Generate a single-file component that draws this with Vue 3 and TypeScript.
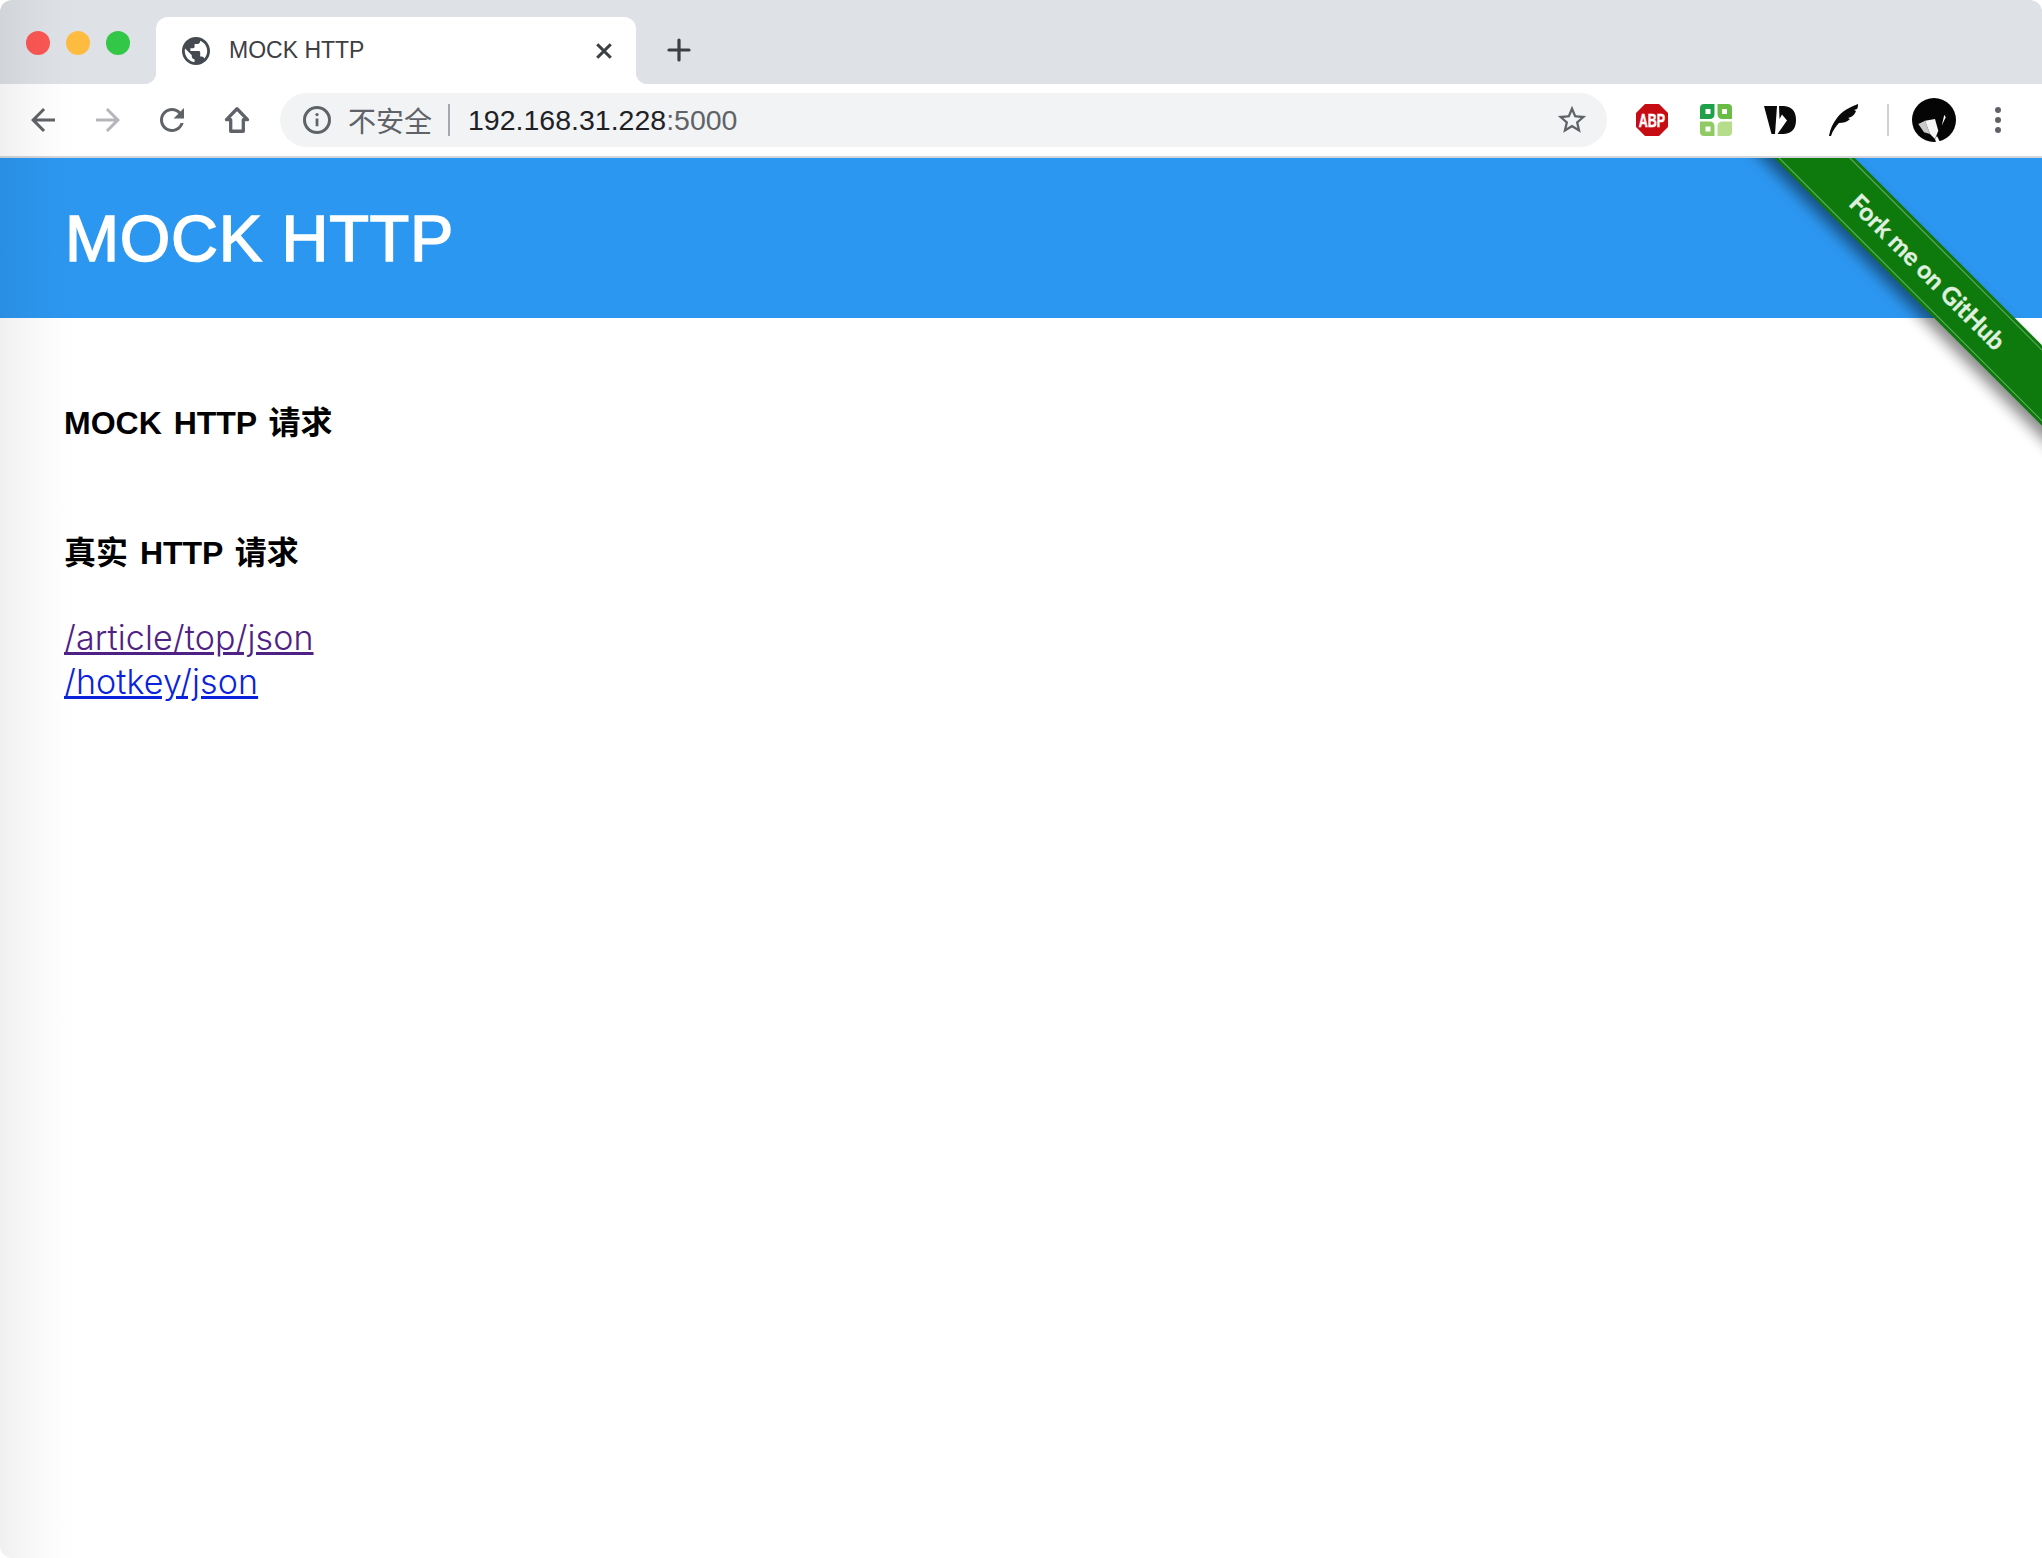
<script setup lang="ts">
interface ApiLink {
  href: string
  visited: boolean
}
// 真实请求的接口列表
const links: ApiLink[] = [
  { href: '/article/top/json', visited: true },
  { href: '/hotkey/json', visited: false },
]
</script>

<template>
  <div class="browser">
    <div class="tab-strip">
      <div class="lights">
        <span class="light light--red"></span>
        <span class="light light--yellow"></span>
        <span class="light light--green"></span>
      </div>
      <div class="tab">
        <svg class="tab__globe" viewBox="2 2 20 20">
          <path fill="#444a50" d="M12 2C6.48 2 2 6.48 2 12s4.48 10 10 10 10-4.48 10-10S17.52 2 12 2zm-1 17.93c-3.95-.49-7-3.85-7-7.930 0-.62.08-1.21.21-1.79L9 15v1c0 1.1.9 2 2 2v1.930zm6.900-2.540c-.26-.81-1-1.390-1.900-1.390h-1v-3c0-.55-.45-1-1-1H8v-2h2c.55 0 1-.45 1-1V7h2c1.100 0 2-.9 2-2v-.41c2.930 1.190 5 4.060 5 7.410 0 2.080-.8 3.970-2.100 5.390z" />
        </svg>
        <span class="tab__title">MOCK HTTP</span>
        <svg class="tab__close" viewBox="0 0 16 16">
          <path d="M2 2l12 12M14 2L2 14" stroke="#3c4043" stroke-width="2.800" fill="none" />
        </svg>
      </div>
      <svg class="new-tab" viewBox="0 0 24 24">
        <path d="M12 2v20M2 12h20" stroke="#3c4043" stroke-width="3.200" stroke-linecap="round" fill="none" />
      </svg>
    </div>

    <div class="toolbar">
      <button class="tool">
        <svg viewBox="0 0 24 24" class="tool__icon"><path fill="#5f6368" d="M20 11H7.830l5.590-5.590L12 4l-8 8 8 8 1.410-1.410L7.830 13H20v-2z" /></svg>
      </button>
      <button class="tool">
        <svg viewBox="0 0 24 24" class="tool__icon"><path fill="#b4b6b9" d="M4 11h12.170l-5.590-5.590L12 4l8 8-8 8-1.410-1.410L16.170 13H4v-2z" /></svg>
      </button>
      <button class="tool">
        <svg viewBox="0 0 24 24" class="tool__icon"><path fill="#5f6368" d="M17.650 6.350C16.200 4.900 14.210 4 12 4c-4.420 0-7.990 3.580-7.990 8s3.570 8 7.990 8c3.730 0 6.840-2.550 7.730-6h-2.080c-.82 2.330-3.040 4-5.650 4-3.310 0-6-2.690-6-6s2.690-6 6-6c1.660 0 3.140.69 4.220 1.780L13 11h7V4l-2.350 2.350z" /></svg>
      </button>
      <button class="tool">
        <svg viewBox="0 0 24 24" class="tool__icon"><path fill="none" stroke="#5f6368" stroke-width="2.200" stroke-linejoin="round" d="M12 4.500L5 11.800h2.800v7.700h8.400v-7.700H19z" /></svg>
      </button>

      <div class="omnibox">
        <svg class="omnibox__info" viewBox="0 0 24 24">
          <circle cx="12" cy="12" r="10" fill="none" stroke="#5f6368" stroke-width="2.400" />
          <path d="M12 10.800v6.200" stroke="#5f6368" stroke-width="2.200" />
          <circle cx="12" cy="7.600" r="1.300" fill="#5f6368" />
        </svg>
        <span class="omnibox__insecure">不安全</span>
        <span class="omnibox__sep"></span>
        <span class="omnibox__url">192.168.31.228<span class="omnibox__port">:5000</span></span>
        <svg class="omnibox__star" viewBox="0 0 24 24">
          <path fill="#5f6368" d="M22 9.240l-7.190-.62L12 2 9.190 8.630 2 9.240l5.460 4.730L5.820 21 12 17.270 18.180 21l-1.630-7.030L22 9.240zM12 15.400l-3.760 2.270 1-4.280-3.320-2.880 4.380-.38L12 6.100l1.710 4.040 4.380.38-3.320 2.880 1 4.280L12 15.400z" />
        </svg>
      </div>

      <div class="extensions">
        <div class="ext">
          <svg viewBox="0 0 34 34" class="ext__icon">
            <path fill="#c70d13" d="M10 1h14l9 9v14l-9 9H10l-9-9V10z" />
            <text transform="translate(17 23.500) scale(1 1.450)" class="abp-text" text-anchor="middle">ABP</text>
          </svg>
        </div>
        <div class="ext">
          <svg viewBox="0 0 34 34" class="ext__icon">
            <path fill="#1fa049" fill-rule="evenodd" d="M5 1h10.500v10q0 5-5 5H1V5q0-4 4-4zM6.500 6v5h5V6z" />
            <path fill="#69bd45" fill-rule="evenodd" d="M18.500 1H29q4 0 4 4v11H23.500q-5 0-5-5zM23 6v5h5V6z" />
            <path fill="#8fcb62" fill-rule="evenodd" d="M1 18.500h9.500q5 0 5 5V33H5q-4 0-4-4zM6.500 23.500v5h5v-5z" />
            <path fill="#b5dd8b" d="M23.500 18.500H33V29q0 4-4 4H18.500V23.500q0-5 5-5z" />
          </svg>
        </div>
        <div class="ext">
          <svg viewBox="0 0 34 34" class="ext__icon">
            <path fill="#0a0a0a" d="M1 3h13l-2 28H8.500z" />
            <path fill="#0a0a0a" d="M16 3h5q12 1 12 14T21 31h-6.500L24 17.500 19 11.500 16.500 16z" />
          </svg>
        </div>
        <div class="ext">
          <svg viewBox="0 0 34 34" class="ext__icon">
            <path fill="#0a0a0a" d="M2 33c1-7 4-13 8-18C15 8 23 4 31 1c0 2 0 3-1 5l-3 1 2 1c-1 3-3 5-5 6l-3 1 2 1c-3 3-7 4-11 4-3 3-6 7-8 13z" />
          </svg>
        </div>
        <span class="ext-sep"></span>
        <svg viewBox="0 0 44 44" class="avatar">
          <circle cx="22" cy="22" r="22" fill="#050505" />
          <path fill="#c9c9c9" d="M6.300 26L13 22.700 18 36l-6-1.700z" />
          <path fill="#f4f4f4" d="M13 22.700L23 21l3.300 11.700L23 41l-5-5z" />
          <path fill="#fff" d="M23 41l2-3 3 6h-4z" />
          <path fill="#fff" d="M32.300 16.700l1.400 2.600-4 8.400z" />
        </svg>
        <svg viewBox="0 0 8 28" class="menu">
          <circle cx="4" cy="4" r="3" fill="#5f6368" />
          <circle cx="4" cy="14" r="3" fill="#5f6368" />
          <circle cx="4" cy="24" r="3" fill="#5f6368" />
        </svg>
      </div>
    </div>

    <div class="page">
      <header class="page__header">
        <h1 class="page__title">MOCK HTTP</h1>
      </header>
      <main class="page__main">
        <h3 class="section-title">MOCK HTTP 请求</h3>
        <h3 class="section-title section-title--second">真实 HTTP 请求</h3>
        <div class="links">
          <a
            v-for="link in links"
            :key="link.href"
            class="links__item"
            :class="{ 'links__item--visited': link.visited }"
            :href="link.href"
          >{{ link.href }}</a>
        </div>
      </main>

      <div class="ribbon-clip">
        <a class="ribbon" href="#">
          <span class="ribbon__inner">Fork me on GitHub</span>
        </a>
      </div>
    </div>

    <div class="edge-shade"></div>
  </div>
</template>

<style scoped>
.browser {
  position: relative;
  width: 2042px;
  height: 1558px;
  overflow: hidden;
  background: #fff;
  font-family: "Liberation Sans", "Noto Sans CJK SC", sans-serif;
  border-radius: 12px 12px 0 12px;
}
.tab-strip {
  height: 84px;
  display: flex;
  background: #dee1e6;
}
.lights {
  width: 156px;
  display: flex;
  gap: 16px;
  padding: 31px 0 0 26px;
  box-sizing: border-box;
}
.light {
  width: 24px;
  height: 24px;
  border-radius: 50%;
}
.light--red {
  background: #fc5753;
}
.light--yellow {
  background: #fdbc40;
}
.light--green {
  background: #33c748;
}
.tab {
  position: relative;
  width: 480px;
  height: 67px;
  margin-top: 17px;
  background: #fff;
  border-radius: 12px 12px 0 0;
  display: flex;
  align-items: center;
  padding: 0 23px 0 26px;
  box-sizing: border-box;
}
.tab::before,
.tab::after {
  content: "";
  position: absolute;
  bottom: 0;
  width: 12px;
  height: 12px;
}
.tab::before {
  left: -12px;
  background: radial-gradient(circle at 0 0, transparent 12px, #fff 12.500px);
}
.tab::after {
  right: -12px;
  background: radial-gradient(circle at 100% 0, transparent 12px, #fff 12.500px);
}
.tab__globe {
  width: 28px;
  height: 28px;
  flex: none;
}
.tab__title {
  margin-left: 19px;
  font-size: 23px;
  color: #3c4043;
  flex: 1;
}
.tab__close {
  width: 18px;
  height: 18px;
}
.new-tab {
  width: 24px;
  height: 24px;
  margin: 38px 0 0 31px;
}
.toolbar {
  height: 72px;
  display: flex;
  align-items: center;
  background: #fff;
  padding-left: 11px;
  border-bottom: 2px solid #d4d6da;
}
.tool {
  width: 64.500px;
  height: 64px;
  padding: 0;
  border: none;
  background: none;
  display: flex;
  align-items: center;
  justify-content: center;
}
.tool__icon {
  width: 36px;
  height: 36px;
}
.omnibox {
  width: 1327px;
  height: 54px;
  margin-left: 11px;
  border-radius: 27px;
  background: #f1f3f4;
  display: flex;
  align-items: center;
  padding: 0 18px 0 22px;
  box-sizing: border-box;
}
.omnibox__info {
  width: 30px;
  height: 30px;
  flex: none;
}
.omnibox__insecure {
  margin-left: 16px;
  font-size: 28px;
  color: #5f6368;
}
.omnibox__sep {
  width: 2px;
  height: 32px;
  margin: 0 18px 0 16px;
  background: #a4a7ab;
}
.omnibox__url {
  flex: 1;
  font-size: 28.500px;
  color: #202124;
}
.omnibox__port {
  color: #5f6368;
}
.omnibox__star {
  width: 34px;
  height: 34px;
}
.extensions {
  display: flex;
  align-items: center;
  padding-left: 13px;
}
.ext {
  width: 64px;
  display: flex;
  justify-content: center;
}
.ext__icon {
  width: 34px;
  height: 34px;
}
.abp-text {
  fill: #fff;
  stroke: #fff;
  stroke-width: 0.3px;
  font-size: 12.500px;
  font-weight: 700;
  font-family: "Liberation Sans", sans-serif;
}
.ext-sep {
  width: 2px;
  height: 32px;
  margin: 0 23px 0 11px;
  background: #d0d2d5;
}
.avatar {
  width: 44px;
  height: 44px;
}
.menu {
  width: 8px;
  height: 28px;
  margin-left: 38px;
}
.page {
  position: relative;
}
.page__header {
  height: 160px;
  display: flex;
  align-items: center;
  padding-left: 65px;
  background: #2c97f0;
}
.page__title {
  margin: 0;
  font-size: 65px;
  font-weight: 400;
  letter-spacing: 0.700px;
  color: #fff;
  -webkit-text-stroke: 1.500px #fff;
}
.page__main {
  padding: 85px 0 0 64px;
}
.section-title {
  margin: 0;
  font-size: 32px;
  line-height: 40px;
  font-weight: 700;
  color: #000;
  word-spacing: 3px;
}
.section-title--second {
  margin-top: 90px;
}
.links {
  margin-top: 43px;
  display: flex;
  flex-direction: column;
  align-items: flex-start;
}
.links__item {
  font-family: "Inter", "Liberation Sans", sans-serif;
  font-size: 34px;
  line-height: 44px;
  font-weight: 300;
  letter-spacing: 0.1px;
  color: #0b22dc;
}
.links__item--visited {
  color: #4f2184;
}
.ribbon-clip {
  position: absolute;
  top: 0;
  right: 0;
  width: 300px;
  height: 300px;
  overflow: hidden;
}
.ribbon {
  position: absolute;
  left: -74px;
  top: 85px;
  width: 520px;
  height: 57px;
  padding: 3px 0;
  box-sizing: border-box;
  background: #0e7a0d;
  box-shadow: 0 9px 14px rgba(0, 0, 0, 0.45);
  transform: rotate(45deg);
  text-decoration: none;
}
.ribbon__inner {
  display: flex;
  align-items: center;
  justify-content: center;
  height: 100%;
  border-top: 1.500px solid rgba(255, 255, 255, 0.4);
  border-bottom: 1.500px solid rgba(255, 255, 255, 0.4);
  box-sizing: border-box;
  font-family: "Lato", sans-serif;
  font-size: 24.500px;
  font-weight: 700;
  color: #dff0df;
  -webkit-text-stroke: 0.4px #dff0df;
}
.edge-shade {
  position: absolute;
  top: 0;
  bottom: 0;
  left: 0;
  width: 80px;
  pointer-events: none;
  background: linear-gradient(to right, rgba(0, 0, 0, 0.06), rgba(0, 0, 0, 0.03) 35%, rgba(0, 0, 0, 0.008) 70%, rgba(0, 0, 0, 0));
}
</style>

<style>
html,
body {
  margin: 0;
  background: #fff;
  overflow: hidden;
}
</style>
